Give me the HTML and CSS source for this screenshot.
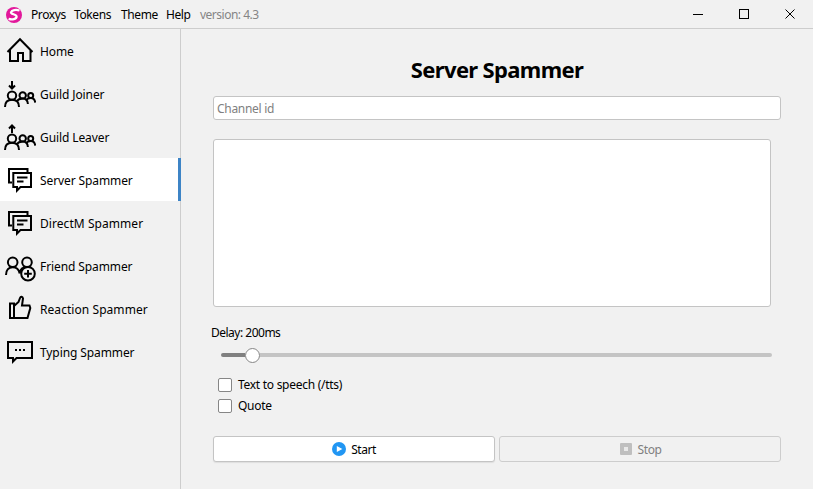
FILE: index.html
```html
<!DOCTYPE html>
<html lang="en">
<head>
<meta charset="utf-8">
<title>Server Spammer</title>
<link rel="stylesheet" href="styles.css">
</head>
<body>
<svg class="defs" aria-hidden="true">
  <symbol id="people" viewBox="0 0 32 32">
    <circle cx="8" cy="17.600" r="4.200"/>
    <path d="M1 29c0-4.600 2.800-7.200 7-7.200s7 2.600 7 7.200"/>
    <circle cx="18.700" cy="17.400" r="3.200"/>
    <path d="M12.500 23.500c1.400-2 3.300-3 6.200-3 3.200 0 5 2 5.200 5.500"/>
    <circle cx="26.700" cy="17.400" r="2.500"/>
    <path d="M22 22.200c1.200-1.500 2.700-2.200 4.700-2.200 2.500 0 4.200 1.500 4.500 4.600"/>
  </symbol>
  <symbol id="chat" viewBox="0 0 32 32">
    <path d="M8 18.500H5V5h18.500v3.500M9.300 9H27v14H16.500L13 26.500V23H9.300zM13 13.500h10.500M13 17.500h6.500"/>
  </symbol>
</svg>
<div class="window">
  <header class="titlebar">
    <svg class="logo" viewBox="0 0 16 16"><circle cx="8" cy="8" r="8"/><path d="M13.500 3.500C10 2.300 5.800 3 5 5.300c-.6 2 5.700 1.900 5.600 4.300-.1 2.400-4.600 3.300-8 2.200"/></svg>
    <nav class="menu"><span class="m1">Proxys</span><span class="m2">Tokens</span><span class="m3">Theme</span><span class="m4">Help</span><span class="version">version: 4.3</span></nav>
    <svg class="controls" viewBox="0 0 138 28"><path d="M18 14.500h10M64.500 9.500h9v9h-9z" shape-rendering="crispEdges"/><path d="m110.500 9.500 9 9m0-9-9 9"/></svg>
  </header>
  <div class="body">
    <aside class="sidebar">
      <div class="item"><svg class="icon" viewBox="0 0 32 32"><path d="M3.500 17 16 4.200 28.500 17M6 14.500V26h8v-8h5v8h7.500V14.500"/></svg><span>Home</span></div>
      <div class="item"><svg class="icon" viewBox="0 0 32 32"><use href="#people"/><path d="M8 3v7M5 7.500l3 3 3-3"/></svg><span>Guild Joiner</span></div>
      <div class="item"><svg class="icon" viewBox="0 0 32 32"><use href="#people"/><path d="M8 12V5M5 7.500l3-3 3 3"/></svg><span>Guild Leaver</span></div>
      <div class="item active"><svg class="icon" viewBox="0 0 32 32"><use href="#chat"/></svg><span>Server Spammer</span></div>
      <div class="item"><svg class="icon" viewBox="0 0 32 32"><use href="#chat"/></svg><span class="wide">DirectM Spammer</span></div>
      <div class="item"><svg class="icon" viewBox="0 0 32 32"><circle cx="8.700" cy="12.300" r="4.800"/><path d="M2 25c0-5 2.800-7.800 6.700-7.800 3.600 0 6.200 2.300 7 6.300M15.700 23.500c.5-4 3.300-6.400 7.300-6.400"/><circle cx="23" cy="12.300" r="4.800"/><circle class="badge" cx="24" cy="23.700" r="6.800"/><path d="M24 20v7.500M20.200 23.700h7.600"/></svg><span>Friend Spammer</span></div>
      <div class="item"><svg class="icon" viewBox="0 0 32 32"><path d="M6 10.500h4V25H6zM10 25h13.500l2.800-10-.8-2.500H18l1-7c-.5-2.300-2.300-2.400-3-.5l-1.500 4L10 13"/></svg><span class="wide">Reaction Spammer</span></div>
      <div class="item"><svg class="icon" viewBox="0 0 32 32"><path d="M4 6h24v16H12.500L9 25.500V22H4zM11 14h2M15 14h2M19 14h2"/></svg><span>Typing Spammer</span></div>
    </aside>
    <main class="content">
      <h1><span>Server Spammer</span></h1>
      <input class="channel" type="text" placeholder="Channel id">
      <div class="message"></div>
      <div class="delay"><span>Delay: 200ms</span></div>
      <div class="slider"><div class="fill"></div><div class="knob"></div><div class="rest"></div></div>
      <div class="check"><i></i><span class="tts">Text to speech (/tts)</span></div>
      <div class="check"><i></i><span class="quote">Quote</span></div>
      <div class="actions">
        <div class="button start"><svg viewBox="0 0 14 14"><circle cx="7" cy="7" r="7" fill="#2196f3"/><path d="m4.800 4 5.600 3-5.600 3z" fill="#fff"/></svg><span>Start</span></div>
        <div class="button stop"><svg viewBox="0 0 14 14"><rect x="1" y="1" width="12" height="12" rx="1" fill="#bfbfbf"/><path d="M5 5h4v4H5z" fill="#e9e9e9"/></svg><span>Stop</span></div>
      </div>
    </main>
  </div>
</div>
</body>
</html>
```
FILE: styles.css
```css
* { box-sizing: border-box; }
body { margin: 0; font: 12px/16px "Noto Sans", "Open Sans", sans-serif; color: #000; background: #f0f0f0; }
.defs { display: none; }
.window { width: 813px; height: 489px; overflow: hidden; background: #f1f1f1; }
.titlebar { display: flex; align-items: center; height: 29px; border-bottom: 1px solid #cdcdcd; padding-left: 6px; }
.logo { width: 16px; height: 16px; margin-top: 1px; fill: #e2189b; overflow: hidden; }
.logo path { fill: none; stroke: #fff; stroke-width: 2.3; }
.menu { display: flex; flex: 1; margin-left: 9px; padding-top: 1px; white-space: nowrap; }
.m1 { width: 43px; }
.m2 { width: 47px; }
.m3 { width: 45px; }
.m4 { width: 34px; }
.menu span { letter-spacing: -0.4px; }
.menu .version { color: #858585; letter-spacing: -0.5px; }
.controls { width: 138px; height: 28px; fill: none; stroke: #000; }
.body { display: flex; height: 460px; }
.sidebar { width: 181px; border-right: 1px solid #cdcdcd; }
.item { display: flex; align-items: center; height: 43px; padding-left: 4px; white-space: nowrap; letter-spacing: -0.1px; }
.item span { margin-top: 3px; }
.item .wide { letter-spacing: 0.06px; }
.icon { flex: none; width: 32px; height: 32px; margin: 1px 4px 0 0; fill: none; stroke: #000; stroke-width: 2; }
.badge { fill: #f1f1f1; }
.active { width: 181px; background: #fff; border-right: 3px solid #3d84c6; }
.content { flex: 1; padding: 25px 32px 0; }
h1 { margin: 0; height: 42px; font-size: 22px; line-height: 30px; font-weight: 700; text-align: center; letter-spacing: -0.65px; }
.channel { display: block; width: 568px; height: 24px; padding: 1px 3px 0; border: 1px solid #c4c4c4; border-radius: 3px; background: #fff; font: inherit; letter-spacing: -0.3px; }
.channel::placeholder { color: #808080; opacity: 1; }
.message { width: 558px; height: 168px; margin-top: 19px; border: 1px solid #c4c4c4; border-radius: 3px; background: #fff; }
.delay { margin: 18px 0 0 -2px; height: 16px; letter-spacing: -0.5px; }
.slider { display: flex; align-items: center; width: 551px; height: 16px; margin: 6px 0 0 8px; }
.fill { width: 24px; height: 4px; border-radius: 2px 0 0 2px; background: #808080; }
.knob { width: 15px; height: 15px; border: 1px solid #868686; border-radius: 50%; background: #fff; }
.rest { flex: 1; height: 4px; border-radius: 0 2px 2px 0; background: #c4c4c4; }
.check { display: flex; align-items: center; height: 21px; margin-left: 5px; letter-spacing: -0.28px; }
.slider + .check { margin-top: 11px; }
.check i { width: 14px; height: 14px; margin-right: 6px; border: 1px solid #868686; border-radius: 2px; background: #fff; }
.actions { display: flex; gap: 4px; margin-top: 20px; }
.button { display: flex; justify-content: center; align-items: center; gap: 5px; width: 282px; height: 26px; border: 1px solid #c4c4c4; border-radius: 3px; letter-spacing: -0.45px; }
.button svg { width: 14px; height: 14px; }
.button span { margin-top: 1px; }
.start { background: #fff; box-shadow: 0 1px 1px #dedede; }
.stop { color: #808080; border-color: #cdcdcd; }
```
